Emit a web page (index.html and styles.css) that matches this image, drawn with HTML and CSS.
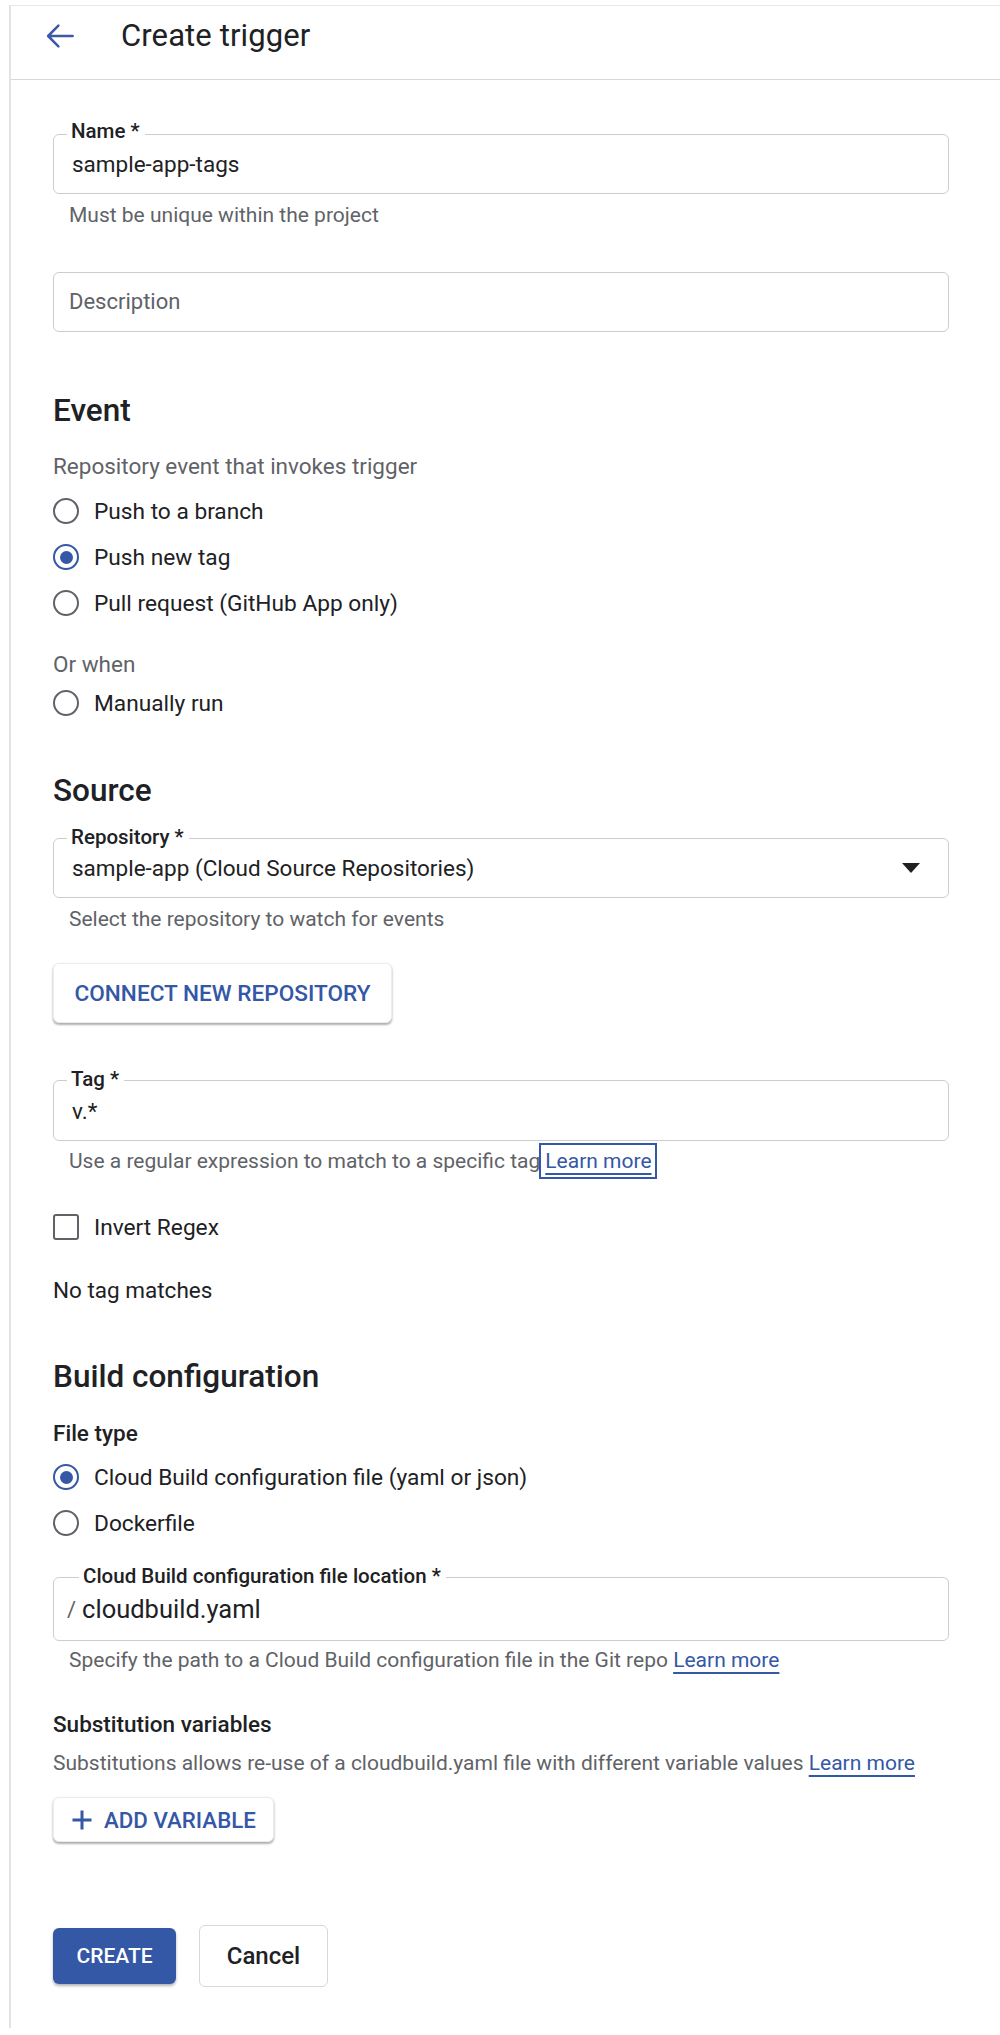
FILE: index.html
```html
<!DOCTYPE html>
<html lang="en">
<head>
<meta charset="utf-8">
<title>Create trigger</title>
<link rel="stylesheet" href="styles.css">
</head>
<body>
<div class="page">
  <header class="topbar">
    <svg class="back" viewBox="0 0 24 24" width="38" height="38" aria-hidden="true">
      <path d="M20 12H5M11 5.5L4.5 12l6.5 6.5" fill="none" stroke="#3a5aa8" stroke-width="1.6" stroke-linecap="round" stroke-linejoin="round"/>
    </svg>
    <h1 class="title">Create trigger</h1>
  </header>

  <main class="content">
    <div class="field f-name">
      <span class="field-label">Name *</span>
      <span class="value">sample-app-tags</span>
    </div>
    <div class="helper h-name">Must be unique within the project</div>

    <div class="field f-desc">
      <span class="placeholder">Description</span>
    </div>

    <h2 class="section s-event">Event</h2>
    <div class="sub s-rep">Repository event that invokes trigger</div>
    <div class="options o-event">
      <div class="opt"><span class="radio"></span><span>Push to a branch</span></div>
      <div class="opt"><span class="radio checked"></span><span>Push new tag</span></div>
      <div class="opt"><span class="radio"></span><span>Pull request (GitHub App only)</span></div>
    </div>
    <div class="sub s-or">Or when</div>
    <div class="options o-manual">
      <div class="opt"><span class="radio"></span><span>Manually run</span></div>
    </div>

    <h2 class="section s-source">Source</h2>
    <div class="field f-repo">
      <span class="field-label l-low">Repository *</span>
      <span class="value">sample-app (Cloud Source Repositories)</span>
      <span class="caret"></span>
    </div>
    <div class="helper h-repo">Select the repository to watch for events</div>

    <button class="btn btn-raised b-connect" type="button">CONNECT NEW REPOSITORY</button>

    <div class="field f-tag">
      <span class="field-label l-low">Tag *</span>
      <span class="value">v.*</span>
    </div>
    <div class="helper h-tag">Use a regular expression to match to a specific tag<a class="link focus" href="#">Learn more</a></div>

    <div class="options o-invert">
      <div class="opt"><span class="checkbox"></span><span>Invert Regex</span></div>
    </div>
    <div class="plain p-nomatch">No tag matches</div>

    <h2 class="section s-build">Build configuration</h2>
    <div class="label l-filetype">File type</div>
    <div class="options o-filetype">
      <div class="opt"><span class="radio checked"></span><span>Cloud Build configuration file (yaml or json)</span></div>
      <div class="opt"><span class="radio"></span><span>Dockerfile</span></div>
    </div>

    <div class="field f-loc">
      <span class="field-label l-loc">Cloud Build configuration file location *</span>
      <span class="prefix">/</span>
      <span class="value v-loc">cloudbuild.yaml</span>
    </div>
    <div class="helper h-loc">Specify the path to a Cloud Build configuration file in the Git repo <a class="link" href="#">Learn more</a></div>

    <div class="label l-subst">Substitution variables</div>
    <div class="sub s-subst">Substitutions allows re-use of a cloudbuild.yaml file with different variable values <a class="link" href="#">Learn more</a></div>

    <button class="btn btn-raised b-add" type="button">
      <svg class="plus" viewBox="0 0 24 24" width="24" height="24" aria-hidden="true">
        <path d="M12 2.5v19M2.5 12h19" stroke="#3457a6" stroke-width="3" fill="none"/>
      </svg>
      <span>ADD VARIABLE</span>
    </button>

    <div class="actions">
      <button class="btn b-create" type="button">CREATE</button>
      <button class="btn b-cancel" type="button">Cancel</button>
    </div>
  </main>
</div>
</body>
</html>
```

FILE: styles.css
```css
* { box-sizing: border-box; }

html, body {
  margin: 0;
  padding: 0;
  background: #ffffff;
}

body {
  font-family: Roboto, "Liberation Sans", Arial, sans-serif;
  color: #202124;
  padding-top: 5px;
}

.page {
  margin-left: 9px;
  border-left: 2px solid #e3e3e3;
  border-top: 1px solid #e8e8e8;
  min-height: 2023px;
}

.topbar {
  height: 74px;
  display: flex;
  align-items: center;
  padding: 0 0 13px 30px;
  border-bottom: 1px solid #d8d8d8;
}

.back {
  display: block;
  flex: none;
}

.title {
  margin: 0 0 0 42px;
  font-size: 31px;
  font-weight: 400;
  line-height: 40px;
  letter-spacing: 0.1px;
}

.content {
  padding-left: 42px;
  width: 940px;
  display: flex;
  flex-direction: column;
  align-items: flex-start;
}

/* text fields */
.field {
  position: relative;
  width: 896px;
  height: 60px;
  border: 1px solid #cdcdcd;
  border-radius: 6px;
  display: flex;
  align-items: center;
  padding: 0 18px;
}

.field-label {
  position: absolute;
  top: -15px;
  left: 13px;
  padding: 0 5px 0 4px;
  background: #fff;
  font-size: 20.5px;
  font-weight: 500;
  line-height: 22px;
  color: #202124;
}

.field-label.l-low {
  top: -13px;
}

.value {
  font-size: 22.5px;
  line-height: 28px;
  color: #202124;
}

.v-loc {
  font-size: 25.5px;
}

.placeholder {
  font-size: 22px;
  line-height: 28px;
  color: #5f6368;
  margin-left: -3px;
}

.prefix {
  font-size: 22px;
  color: #5f6368;
  margin-left: -5px;
  margin-right: 6px;
}

.caret {
  margin-left: auto;
  margin-right: 10px;
  width: 0;
  height: 0;
  border-left: 9px solid transparent;
  border-right: 9px solid transparent;
  border-top: 10px solid #202124;
}

.helper {
  font-size: 21px;
  line-height: 24px;
  color: #5f6368;
  padding-left: 16px;
}

.sub {
  font-size: 22.5px;
  line-height: 28px;
  color: #5f6368;
}

.s-subst {
  font-size: 21px;
}

.plain {
  font-size: 22.5px;
  line-height: 28px;
  color: #202124;
}

.label {
  font-size: 22.5px;
  font-weight: 500;
  line-height: 28px;
  color: #202124;
}

.section {
  margin: 0;
  font-size: 31.5px;
  font-weight: 500;
  line-height: 40px;
  color: #202124;
}

.options {
  display: flex;
  flex-direction: column;
}

.opt {
  height: 46px;
  display: flex;
  align-items: center;
  gap: 15px;
  font-size: 22.7px;
  color: #202124;
}

.radio {
  width: 26px;
  height: 26px;
  border-radius: 50%;
  border: 2.5px solid #5f6368;
  display: flex;
  align-items: center;
  justify-content: center;
  flex: none;
}

.radio.checked {
  border-color: #3457a6;
}

.radio.checked::after {
  content: "";
  width: 13px;
  height: 13px;
  border-radius: 50%;
  background: #3457a6;
}

.checkbox {
  width: 26px;
  height: 26px;
  border: 2.5px solid #5f6368;
  border-radius: 3px;
  flex: none;
}

.link {
  color: #3457a6;
  text-decoration: underline;
  text-underline-offset: 5px;
  text-decoration-thickness: 2px;
}

.link.focus {
  display: inline-block;
  outline: 2px solid #3457a6;
  padding: 4px 3px 4px 4px;
  line-height: 24px;
  margin-left: 1px;
}

/* buttons */
.btn {
  font-family: Roboto, "Liberation Sans", Arial, sans-serif;
  border: none;
  background: #fff;
  cursor: pointer;
}

.btn-raised {
  border-radius: 6px;
  border: 1px solid #ececec;
  box-shadow: 0 2px 2px rgba(60, 64, 67, 0.35), 0 1px 3px rgba(60, 64, 67, 0.15);
  color: #3457a6;
  font-weight: 500;
}

.b-connect {
  height: 60px;
  width: 339px;
  font-size: 22.6px;
  padding: 0;
}

.b-add {
  height: 45px;
  width: 221px;
  font-size: 22.3px;
  display: flex;
  align-items: center;
  gap: 10px;
  padding: 0 0 0 16px;
}

.plus { display: block; }

.actions {
  display: flex;
  align-items: center;
  gap: 23px;
}

.b-create {
  width: 123px;
  height: 56px;
  border-radius: 6px;
  background: #3457a6;
  color: #fff;
  font-size: 21px;
  font-weight: 500;
  box-shadow: 0 2px 3px rgba(0, 0, 0, 0.3);
}

.b-cancel {
  width: 129px;
  height: 62px;
  border-radius: 6px;
  border: 1px solid #d8d8d8;
  color: #202124;
  font-size: 24px;
  font-weight: 500;
}

/* vertical rhythm */
.f-name { margin-top: 54px; }
.h-name { margin-top: 9px; }
.f-desc { margin-top: 45px; }
.s-event { margin-top: 59px; }
.s-rep { margin-top: 21px; }
.o-event { margin-top: 8px; }
.s-or { margin-top: 24px; }
.o-manual { margin-top: 2px; }
.s-source { margin-top: 45px; }
.f-repo { margin-top: 27px; }
.h-repo { margin-top: 9px; }
.b-connect { margin-top: 32px; }
.f-tag { margin-top: 57px; height: 61px; }
.h-tag { margin-top: 4px; }
.o-invert { margin-top: 27px; }
.p-nomatch { margin-top: 26px; }
.s-build { margin-top: 53px; }
.l-filetype { margin-top: 22px; }
.o-filetype { margin-top: 7px; }
.f-loc { margin-top: 31px; height: 64px; }
.l-loc { left: 25px; top: -13px; }
.h-loc { margin-top: 7px; }
.l-subst { margin-top: 38px; }
.s-subst { margin-top: 11px; }
.b-add { margin-top: 20px; }
.actions { margin-top: 83px; }
```
